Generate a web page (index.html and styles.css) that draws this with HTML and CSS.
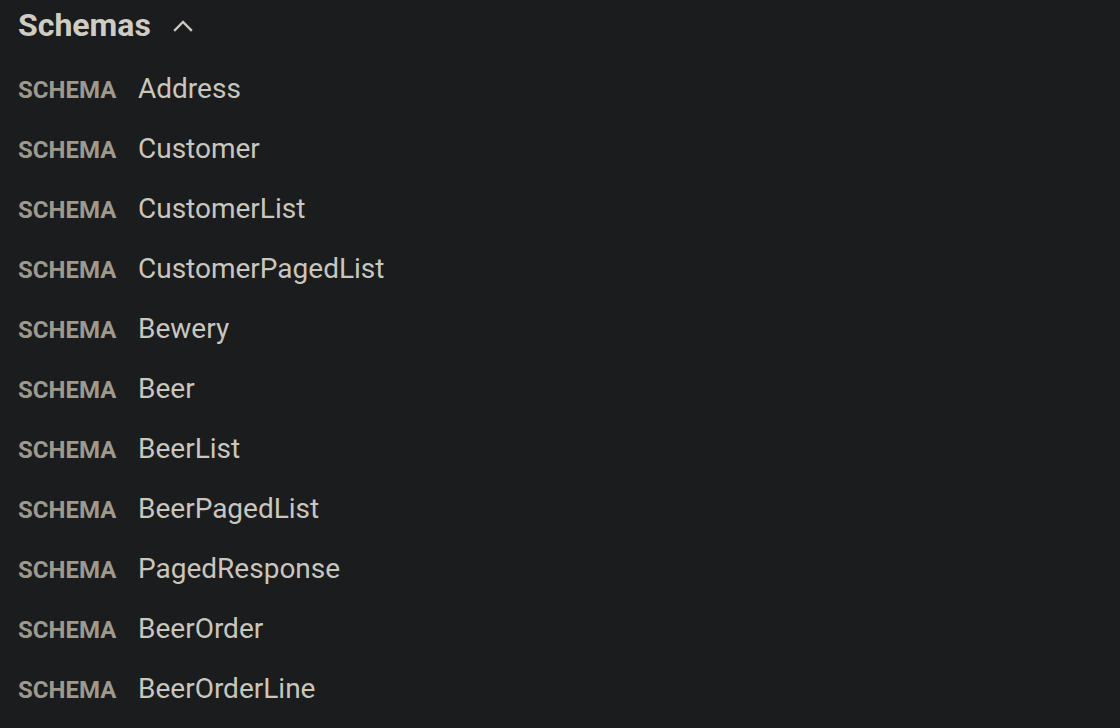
FILE: index.html
```html
<!DOCTYPE html>
<html>
<head>
<meta charset="utf-8">
<link rel="stylesheet" href="styles.css">
</head>
<body>
<section class="schemas">
  <h2 class="title">
    <span>Schemas</span>
    <svg class="chevron" width="20" height="14" viewBox="0 0 20 14"><path d="M2 12 L10 4 L18 12" fill="none" stroke="#c9c6be" stroke-width="2.4" stroke-linecap="square"/></svg>
  </h2>
  <ul class="list">
    <li class="row"><span class="tag">SCHEMA</span><span class="name">Address</span></li>
    <li class="row"><span class="tag">SCHEMA</span><span class="name">Customer</span></li>
    <li class="row"><span class="tag">SCHEMA</span><span class="name">CustomerList</span></li>
    <li class="row"><span class="tag">SCHEMA</span><span class="name">CustomerPagedList</span></li>
    <li class="row"><span class="tag">SCHEMA</span><span class="name">Bewery</span></li>
    <li class="row"><span class="tag">SCHEMA</span><span class="name">Beer</span></li>
    <li class="row"><span class="tag">SCHEMA</span><span class="name">BeerList</span></li>
    <li class="row"><span class="tag">SCHEMA</span><span class="name">BeerPagedList</span></li>
    <li class="row"><span class="tag">SCHEMA</span><span class="name">PagedResponse</span></li>
    <li class="row"><span class="tag">SCHEMA</span><span class="name">BeerOrder</span></li>
    <li class="row"><span class="tag">SCHEMA</span><span class="name">BeerOrderLine</span></li>
  </ul>
</section>
</body>
</html>
```
FILE: styles.css
```css
html, body {
  margin: 0;
  padding: 0;
  background: #1b1c1e;
  height: 100%;
  overflow: hidden;
}
body {
  font-family: Roboto, "Liberation Sans", sans-serif;
}
.schemas {
  padding: 0 18px;
}
.title {
  margin: 0;
  padding-top: 1px;
  display: flex;
  align-items: center;
  gap: 22px;
  height: 48px;
  font-size: 32px;
  font-weight: 700;
  color: #cfccc4;
  line-height: 48px;
}
.chevron {
  display: block;
  margin-top: -1px;
}
.list {
  list-style: none;
  margin: 0;
  padding: 0;
}
.row {
  display: flex;
  align-items: baseline;
  height: 60px;
  line-height: 80px;
}
.tag {
  width: 120px;
  font-size: 24px;
  font-weight: 700;
  color: #9e998c;
}
.name {
  font-size: 28px;
  color: #c9c6be;
}
```
